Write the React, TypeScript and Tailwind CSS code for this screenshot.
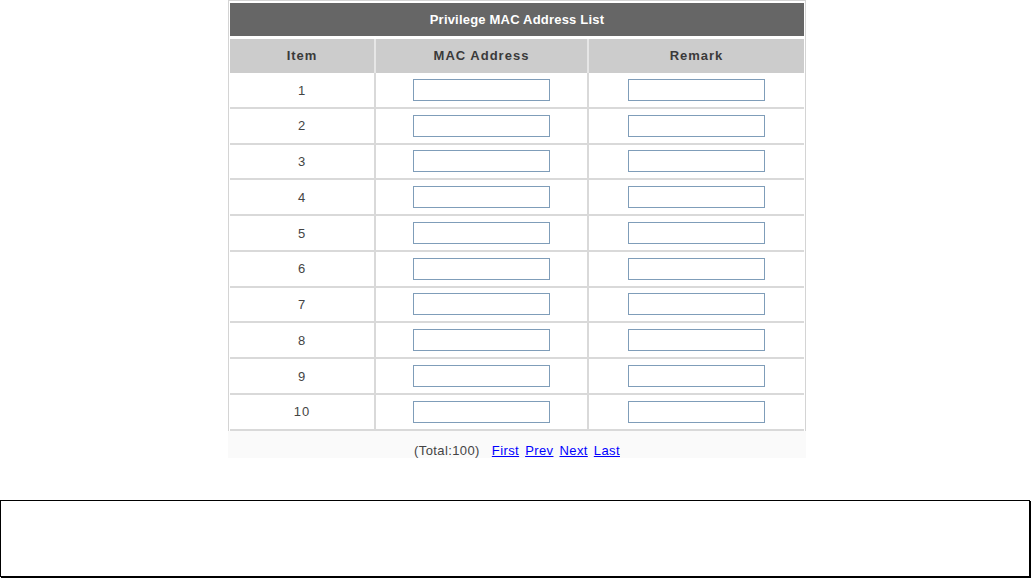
const rows = [1, 2, 3, 4, 5, 6, 7, 8, 9, 10];

function Field() {
  return (
    <input
      type="text"
      className="h-[22px] w-[137px] border border-[#7f9db9] bg-white outline-none"
    />
  );
}

export default function App() {
  return (
    <div
      className="h-[579px] w-[1033px] overflow-hidden bg-white text-[13px] text-[#333]"
      style={{ fontFamily: '"Liberation Sans", Arial, sans-serif' }}
    >
      <div className="ml-[228px] w-[578px]">
        <div className="border border-b-0 border-[#d4d4d4] px-[1px] pt-[2px]">
          <div className="flex h-[33px] items-center justify-center bg-[#666666] font-bold tracking-[0.2px] text-white">
            Privilege MAC Address List
          </div>
          <div className="mt-[3px] grid h-[34px] grid-cols-[144px_213px_1fr] bg-[#cccccc] font-bold tracking-[1px] text-[#3a3a3a]">
            <div className="flex items-center justify-center">Item</div>
            <div className="flex items-center justify-center border-l-2 border-[#e6e6e6]">MAC Address</div>
            <div className="flex items-center justify-center border-l-2 border-[#e6e6e6]">Remark</div>
          </div>
          {rows.map((n) => (
            <div
              key={n}
              className="grid h-[35.75px] grid-cols-[144px_213px_1fr] border-b-2 border-[#d9d9d9]"
            >
              <div className="flex items-center justify-center pt-[1px] tracking-[1px] text-[#444]">{n}</div>
              <div className="flex items-center justify-center border-l-2 border-[#d9d9d9]">
                <Field />
              </div>
              <div className="flex items-center justify-center border-l-2 border-[#d9d9d9]">
                <Field />
              </div>
            </div>
          ))}
        </div>
        <div className="flex h-[27px] items-end justify-center gap-[6px] bg-[#fafafa] tracking-[0.4px] leading-[14px]">
          <span className="mr-[6px] text-[#444]">(Total:100)</span>
          <a className="text-[#0000ff] underline" href="#">First</a>
          <a className="text-[#0000ff] underline" href="#">Prev</a>
          <a className="text-[#0000ff] underline" href="#">Next</a>
          <a className="text-[#0000ff] underline" href="#">Last</a>
        </div>
      </div>
      <div className="mt-[42px] h-[77px] w-[1030px] border border-black shadow-[1px_1px_0_#000]" />
    </div>
  );
}
